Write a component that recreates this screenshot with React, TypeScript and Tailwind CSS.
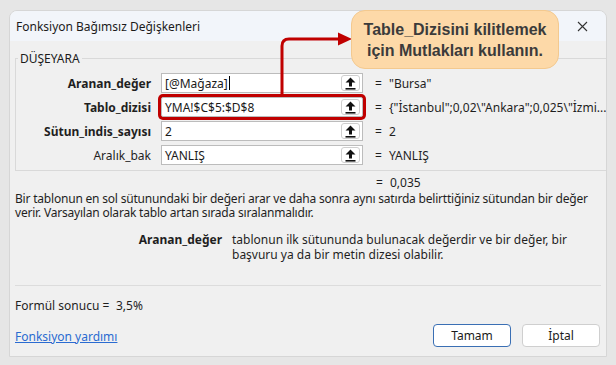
import React from "react";

type Arg = {
  label: string;
  value: string;
  result: string;
  bold: boolean;
  caret?: boolean;
  marked?: boolean;
};

const args: Arg[] = [
  { label: "Aranan_değer", value: "[@Mağaza]", result: "\"Bursa\"", bold: true, caret: true },
  {
    label: "Tablo_dizisi",
    value: "YMA!$C$5:$D$8",
    result: "{\"İstanbul\";0,02\\\"Ankara\";0,025\\\"İzmi...",
    bold: true,
    marked: true,
  },
  { label: "Sütun_indis_sayısı", value: "2", result: "2", bold: true },
  { label: "Aralık_bak", value: "YANLIŞ", result: "YANLIŞ", bold: false },
];

function PickIcon() {
  return (
    <svg width="11" height="13" viewBox="0 0 11 13" fill="none">
      <path d="M5.5 0.5 L10.5 5.5 L7 5.5 L7 9.5 L4 9.5 L4 5.5 L0.5 5.5 Z" fill="#111" />
      <rect x="0.5" y="11" width="10" height="1.6" fill="#111" />
    </svg>
  );
}

function ArgRow({ arg }: { arg: Arg }) {
  return (
    <div className="flex h-5 items-center">
      <div
        className={`w-[135px] pr-[1px] text-right text-[#1f1f1f] ${arg.bold ? "font-bold" : ""}`}
      >
        {arg.label}
      </div>
      <div
        className={`relative ml-[9px] flex h-5 w-[202px] items-center border border-[#bcbcbc] bg-white pl-[3px] ${
          arg.marked ? "rounded-[2px] ring-[3px] ring-[#c00000]" : ""
        }`}
      >
        <span className="text-[#1a1a1a]">{arg.value}</span>
        {arg.caret ? <span className="ml-[1px] h-[14px] w-px bg-black" /> : null}
        <div className="absolute right-[2px] top-[1px] flex h-[16px] w-[19px] items-center justify-center rounded-[3px] border border-[#cfcfcf] bg-white">
          <PickIcon />
        </div>
      </div>
      <span className="ml-[12px] w-[14px]">=</span>
      <span className="text-[#1f1f1f]">{arg.result}</span>
    </div>
  );
}

export default function App() {
  return (
    <div className="relative h-[365px] w-[616px] overflow-hidden bg-[#e6e6e6] pl-[9px] pr-[9px] pt-[10px] font-['Noto_Sans',sans-serif] text-[12px] leading-[15px] text-[#1f1f1f]">
      <div className="flex h-[347px] flex-col overflow-hidden rounded-t-[8px] border border-[#d6d6d6] bg-[#f0f0f0]">
        <div className="flex h-[30px] shrink-0 items-center justify-between bg-[#f2f5fa] pl-[6px] pr-[18px]">
          <span className="text-[#1b1b1b]">Fonksiyon Bağımsız Değişkenleri</span>
          <svg width="11" height="11" viewBox="0 0 11 11">
            <path d="M1 1 L10 10 M10 1 L1 10" stroke="#333" strokeWidth="1.1" />
          </svg>
        </div>

        <div className="flex flex-1 flex-col px-[5px]">
          <fieldset className="mt-[10px] h-[120px] border border-[#d9d9d9] pl-[1px]">
            <legend className="ml-[1px] px-[2px] text-[#1b1b1b]">DÜŞEYARA</legend>
            <div className="mt-[7px] flex flex-col gap-[4px]">
              {args.map((a) => (
                <ArgRow key={a.label} arg={a} />
              ))}
            </div>
          </fieldset>

          <div className="mt-[5px] flex h-[14px] items-center pl-[361px] leading-[14px]">
            <span className="w-[14px]">=</span>
            <span>0,035</span>
          </div>

          <p className="mt-[2px] leading-[14px] tracking-[-0.2px]">
            Bir tablonun en sol sütunundaki bir değeri arar ve daha sonra aynı satırda belirttiğiniz sütundan bir değer
            verir. Varsayılan olarak tablo artan sırada sıralanmalıdır.
          </p>

          <div className="mt-[12px] flex leading-[15px]">
            <span className="w-[217px] shrink-0 pr-[10px] text-right font-bold">Aranan_değer</span>
            <span className="w-[360px]">
              tablonun ilk sütununda bulunacak değerdir ve bir değer, bir başvuru ya da bir metin dizesi olabilir.
            </span>
          </div>

          <div className="mt-[23px] h-px bg-[#dcdcdc]" />

          <div className="mt-[12px] flex">
            <span className="w-[101px]">Formül sonucu =</span>
            <span>3,5%</span>
          </div>

          <div className="mt-[11px] flex items-center justify-between">
            <a className="mt-[1px] text-[#2a6bd1] underline">Fonksiyon yardımı</a>
            <div className="flex gap-[11px] pr-[1px]">
              <button className="h-[23px] w-[78px] rounded-[4px] border border-[#3a6fb4] bg-white text-[#1b1b1b]">
                Tamam
              </button>
              <button className="h-[23px] w-[78px] rounded-[4px] border border-[#cfcfcf] bg-white text-[#1b1b1b]">
                İptal
              </button>
            </div>
          </div>
        </div>
      </div>

      <svg className="absolute left-0 top-0" width="616" height="365" viewBox="0 0 616 365" fill="none">
        <path d="M282 95 L282 46 Q282 39 289 39 L340 39" stroke="#c00000" strokeWidth="3" />
        <path d="M338 32.5 L352 39 L338 45.5 Z" fill="#c00000" />
      </svg>

      <div className="absolute left-[351px] top-[10px] flex h-[59px] w-[208px] flex-col items-center justify-center rounded-[14px] border border-[#f3c98f] bg-[#fdd9a8] font-['Liberation_Sans',sans-serif] text-[16px] font-bold leading-[21px] text-[#3b3b3b]">
        <span>Table_Dizisini kilitlemek</span>
        <span>için Mutlakları kullanın.</span>
      </div>
    </div>
  );
}
